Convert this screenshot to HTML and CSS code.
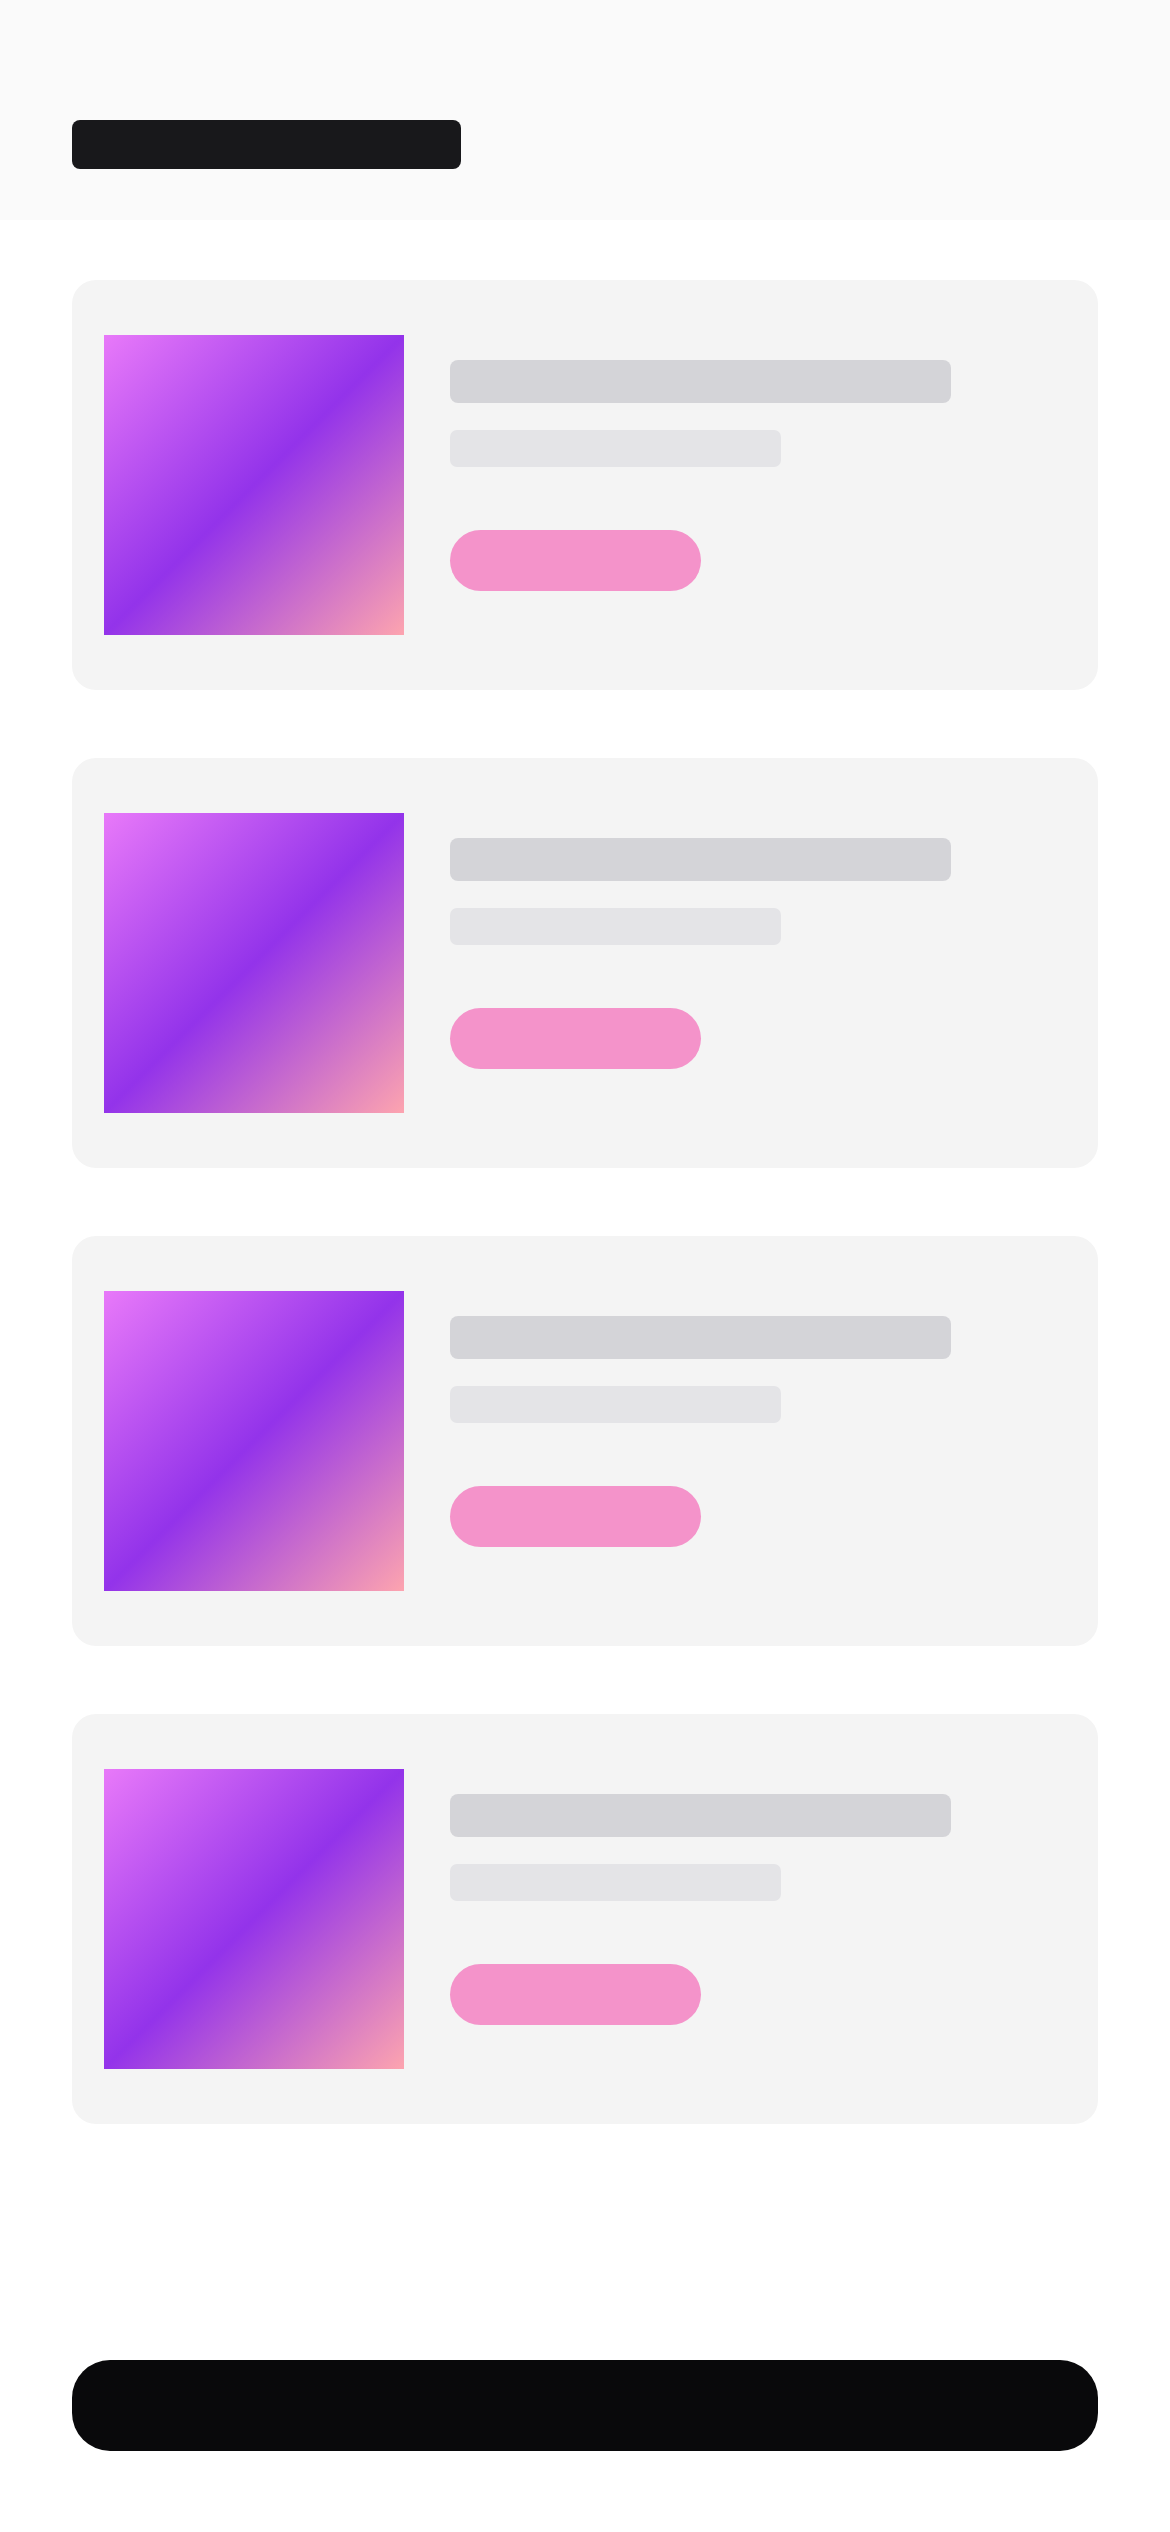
FILE: index.html
```html
<!DOCTYPE html>
<html lang="en">
<head>
<meta charset="utf-8">
<title>Cards</title>
<link rel="stylesheet" href="styles.css">
</head>
<body>
<div class="page">
  <header class="header">
    <div class="title-bar"></div>
  </header>
  <main class="list">
    <div class="card">
      <div class="thumb"></div>
      <div class="info">
        <div class="line-title"></div>
        <div class="line-sub"></div>
        <div class="pill"></div>
      </div>
    </div>
    <div class="card">
      <div class="thumb"></div>
      <div class="info">
        <div class="line-title"></div>
        <div class="line-sub"></div>
        <div class="pill"></div>
      </div>
    </div>
    <div class="card">
      <div class="thumb"></div>
      <div class="info">
        <div class="line-title"></div>
        <div class="line-sub"></div>
        <div class="pill"></div>
      </div>
    </div>
    <div class="card">
      <div class="thumb"></div>
      <div class="info">
        <div class="line-title"></div>
        <div class="line-sub"></div>
        <div class="pill"></div>
      </div>
    </div>
  </main>
  <footer class="footer">
    <div class="cta"></div>
  </footer>
</div>
</body>
</html>
```

FILE: styles.css
```css
html, body {
  margin: 0;
  padding: 0;
  background: #ffffff;
  font-family: "Inter", "Liberation Sans", sans-serif;
}

.page {
  display: flex;
  flex-direction: column;
  min-height: 2532px;
  box-sizing: border-box;
}

.header {
  background: #fafafa;
  height: 220px;
  box-sizing: border-box;
  padding: 120px 72px 0;
}

.title-bar {
  width: 389px;
  height: 49px;
  background: #18181b;
  border-radius: 8px;
}

.list {
  display: flex;
  flex-direction: column;
  gap: 68px;
  padding: 60px 72px 0;
}

.card {
  display: flex;
  align-items: flex-start;
  gap: 46px;
  background: #f4f4f4;
  border-radius: 24px;
  padding: 55px 32px;
}

.thumb {
  width: 300px;
  height: 300px;
  flex: none;
  background: linear-gradient(135deg, #e879f9 0%, #9333ea 50%, #fda4af 100%);
}

.info {
  display: flex;
  flex-direction: column;
  align-items: flex-start;
  padding-top: 25px;
}

.line-title {
  width: 501px;
  height: 43px;
  background: #d4d4d8;
  border-radius: 8px;
}

.line-sub {
  width: 331px;
  height: 37px;
  margin-top: 27px;
  background: #e4e4e7;
  border-radius: 7px;
}

.pill {
  width: 251px;
  height: 61px;
  margin-top: 63px;
  background: #f493ca;
  border-radius: 31px;
}

.footer {
  margin-top: auto;
  padding: 0 72px 81px;
}

.cta {
  height: 91px;
  background: #09090b;
  border-radius: 38px;
}
```
